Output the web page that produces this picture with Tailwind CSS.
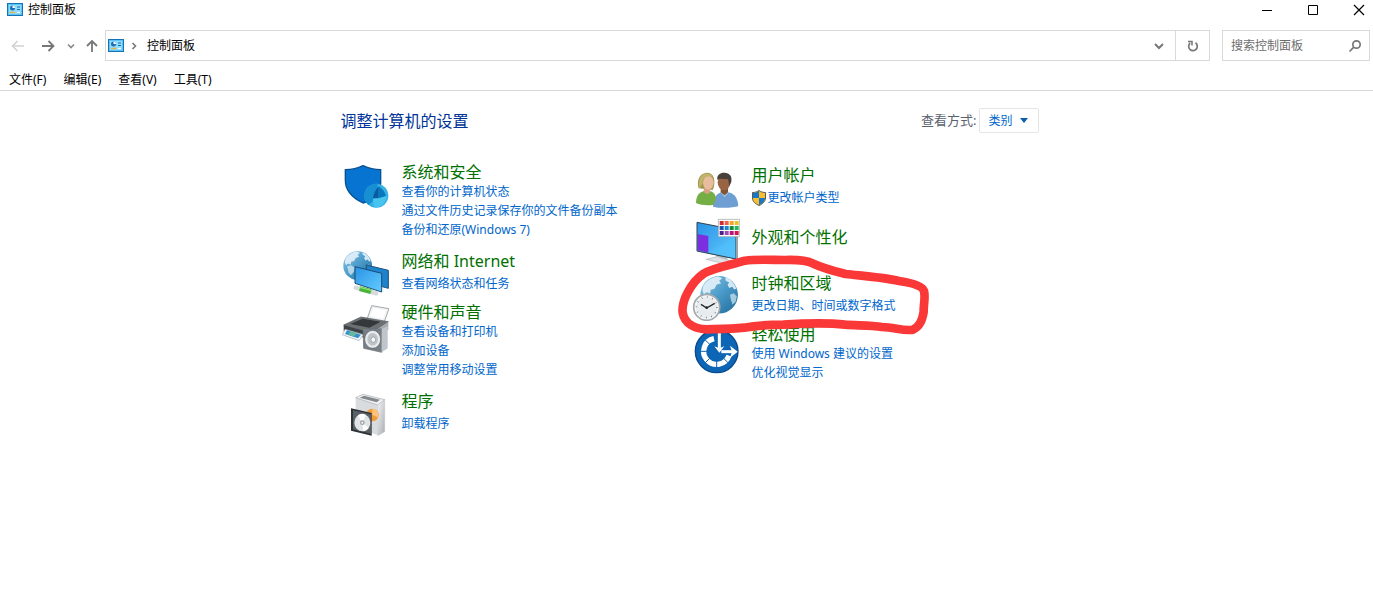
<!DOCTYPE html>
<html lang="zh-CN">
<head>
  <meta charset="UTF-8" />
  <meta name="viewport" content="width=device-width, initial-scale=1.0" />
  <title>控制面板</title>
  <script src="https://cdn.jsdelivr.net/npm/@tailwindcss/browser@4"></script>
</head>
<body class="bg-white min-h-screen text-xs text-black font-['Noto_Sans','Noto_Sans_CJK_SC',sans-serif]">

<!-- Shared symbols -->
<svg class="absolute w-0 h-0" aria-hidden="true">
  <symbol id="panel" viewBox="0 0 16 13">
    <rect x=".5" y=".5" width="15" height="12" fill="#5cc3f5" stroke="#1673b8"/>
    <rect x="2" y="2" width="12" height="9" fill="#8fdcff"/>
    <circle cx="5.500" cy="5" r="2.500" fill="#1d6fb5"/>
    <path d="M5.500 5V2.500A2.500 2.500 0 0 1 8 5z" fill="#fff"/>
    <path d="M3 9.500h5" stroke="#e2b53c" stroke-width="1.500"/>
    <path d="M10 4h3M10 6.500h3" stroke="#1d6fb5"/>
    <path d="M10 9.500h3" stroke="#fff"/>
  </symbol>
  <linearGradient id="globeFill" x1="0" y1="0" x2="1" y2="1">
    <stop offset="0" stop-color="#8fc7e6"/><stop offset=".5" stop-color="#4a9bc9"/><stop offset="1" stop-color="#1f6797"/>
  </linearGradient>
  <linearGradient id="screenFill" x1="0" y1="0" x2="1" y2="1">
    <stop offset="0" stop-color="#2a93e6"/><stop offset="1" stop-color="#63ccff"/>
  </linearGradient>
  <linearGradient id="metal" x1="0" y1="0" x2="1" y2="1">
    <stop offset="0" stop-color="#f4f5f6"/><stop offset="1" stop-color="#a9adb2"/>
  </linearGradient>
  <symbol id="globe" viewBox="0 0 100 100">
    <circle cx="50" cy="50" r="49" fill="url(#globeFill)"/>
    <path d="M8 28C18 10 34 3 48 2l10 5-8 6 5 7-12 4-5 10-10 3-2 10-8-4-8 6-4-10z" fill="#e3f1f8" opacity=".9"/>
    <path d="M66 4c14 5 24 16 29 30l-6 2-5-7-8 3-4-8 4-6-9-5z" fill="#e3f1f8" opacity=".9"/>
    <path d="M14 52l14-3 12 8-3 14-10 12-8-10z" fill="#d4e9f3" opacity=".75"/>
    <path d="M78 50l10-4 8 8-3 14-8 8-4-12z" fill="#d4e9f3" opacity=".7"/>
  </symbol>
</svg>

<!-- Title bar -->
<header class="flex items-center justify-between h-[19px] pl-[7px] pr-[8px]">
  <h1 class="flex items-center gap-[5px]">
    <svg class="w-4 h-[13px]"><use href="#panel"/></svg>
    控制面板
  </h1>
  <div class="flex items-center gap-[34px]">
    <button aria-label="最小化"><svg class="w-3 h-3" viewBox="0 0 12 12"><path d="M1 6.500h10" stroke="#000"/></svg></button>
    <button aria-label="最大化"><svg class="w-3 h-3" viewBox="0 0 12 12"><path d="M1.500 1.500h9v9h-9z" fill="none" stroke="#000"/></svg></button>
    <button aria-label="关闭"><svg class="w-3 h-3" viewBox="0 0 12 12"><path d="M1 1l10 10M11 1L1 11" stroke="#000" stroke-width="1.200"/></svg></button>
  </div>
</header>

<!-- Navigation -->
<div class="flex items-center h-[31px] mt-[11px] pl-[11px] pr-[3px]">
  <div class="flex items-center shrink-0 w-[94px]">
    <button aria-label="后退"><svg class="w-[14px] h-[14px]" viewBox="0 0 14 14" fill="none" stroke="#d2d2d2" stroke-width="1.600"><path d="M13 7H1.500M6.500 2l-5 5 5 5"/></svg></button>
    <button class="ml-4" aria-label="前进"><svg class="w-[14px] h-[14px]" viewBox="0 0 14 14" fill="none" stroke="#777" stroke-width="1.800"><path d="M1 7h11.500M7.500 2l5 5-5 5"/></svg></button>
    <button class="ml-3" aria-label="最近浏览的位置"><svg class="w-2 h-2" viewBox="0 0 8 8" fill="none" stroke="#888" stroke-width="1.600"><path d="M1 2.500l3 3 3-3"/></svg></button>
    <button class="ml-[10px]" aria-label="向上"><svg class="w-[14px] h-[14px]" viewBox="0 0 14 14" fill="none" stroke="#777" stroke-width="1.800"><path d="M7 13V2M2 7l5-5 5 5"/></svg></button>
  </div>
  <div class="flex flex-1 items-center h-[31px] border border-[#d9d9d9] pl-[2px]">
    <svg class="w-4 h-[13px]"><use href="#panel"/></svg>
    <svg class="w-2 h-2 ml-[6px]" viewBox="0 0 8 8" fill="none" stroke="#777" stroke-width="1.600"><path d="M2.500 1l3 3-3 3"/></svg>
    <a href="#" class="ml-[9px]">控制面板</a>
    <button class="ml-auto mr-[11px]" aria-label="展开地址"><svg class="w-[10px] h-[10px]" viewBox="0 0 10 10" fill="none" stroke="#777" stroke-width="2"><path d="M1 3l4 4 4-4"/></svg></button>
    <button class="flex items-center justify-center w-[34px] h-full border-l border-[#d9d9d9]" aria-label="刷新">
      <svg class="w-3 h-3" viewBox="0 0 12 12" fill="none" stroke="#777" stroke-width="1.700"><path d="M8.500 2.800A4.300 4.300 0 1 1 3.200 3"/><path d="M1 1.500h4V5.500" stroke-width="1.500"/></svg>
    </button>
  </div>
  <div class="flex items-center w-[148px] h-[31px] ml-3 border border-[#d9d9d9] pl-2 pr-[7px]">
    <input type="text" aria-label="搜索控制面板" placeholder="搜索控制面板" class="flex-1 min-w-0 outline-none placeholder:text-[#6d6d6d]" />
    <button aria-label="搜索"><svg class="w-[14px] h-[14px]" viewBox="0 0 14 14" fill="none" stroke="#777" stroke-width="1.700"><circle cx="8.500" cy="5.500" r="3.700"/><path d="M5.800 8.200L1.500 12.500"/></svg></button>
  </div>
</div>

<!-- Menu bar -->
<nav class="flex items-center gap-[17px] h-[30px] pl-[9px] pt-2 border-b border-[#d9d9d9]">
  <button>文件(F)</button>
  <button>编辑(E)</button>
  <button>查看(V)</button>
  <button>工具(T)</button>
</nav>

<main class="max-w-[704px] mx-auto pl-[6px] pt-[17px]">
  <div class="flex items-center justify-between h-[25px]">
    <h2 class="text-base text-[#003399]">调整计算机的设置</h2>
    <div class="flex items-center gap-[2px]">
      <label for="viewBy" class="text-[13px] text-[#5a6270]">查看方式:</label>
      <div class="relative">
        <select id="viewBy" class="appearance-none block w-[60px] h-[25px] pl-[9px] border border-[#e5e5e5] rounded-xs bg-white text-[#0066cc]">
          <option>类别</option>
          <option>大图标</option>
          <option>小图标</option>
        </select>
        <svg class="absolute right-[11px] top-[10px] w-2 h-[5px] pointer-events-none" viewBox="0 0 8 5"><path d="M0 0h8L4 5z" fill="#0a5cad"/></svg>
      </div>
    </div>
  </div>

  <div class="grid grid-cols-[351px_1fr] items-start mt-[30px] leading-[19px] text-[#0066cc]">
    <!-- Left column -->
    <div>
      <section class="flex gap-[13px]">
        <svg class="w-12 h-12 shrink-0" viewBox="0 0 144 144">
          <path d="M13 20Q42 20 66 8q26 12 53 12v40c0 30-25 52-53 60C32 104 13 84 13 52z" fill="#0874d1" stroke="#07518f" stroke-width="4"/>
          <circle cx="106" cy="98" r="36" fill="#35b1e6"/>
          <path d="M106 62a36 36 0 0 0-36 36c0 14 6 22 12 28 18-12 28-30 28-64z" fill="#1690d2"/>
          <path d="M113 70v36H96c2-14 8-26 17-36z" fill="#075b9f"/>
          <path d="M113 70c12 8 20 18 22 30l-22 6z" fill="#0a77bd"/>
          <path d="M96 107l17-1 24-7c-2 20-16 34-34 35-5-8-8-16-7-27z" fill="#48c4ef"/>
        </svg>
        <div>
          <h3 class="text-base leading-[19px] text-[#007000]"><a href="#">系统和安全</a></h3>
          <a href="#" class="block">查看你的计算机状态</a>
          <a href="#" class="block">通过文件历史记录保存你的文件备份副本</a>
          <a href="#" class="block">备份和还原(Windows 7)</a>
        </div>
      </section>

      <section class="flex gap-[13px] mt-[10px]">
        <svg class="w-12 h-12 shrink-0" viewBox="0 0 144 144">
          <use href="#globe" x="6" y="6" width="88" height="88"/>
          <path d="M76 48l66 16v54l-66-18z" fill="#1f83cc" stroke="#1b5078" stroke-width="3"/>
          <path d="M42 53l80 20v56l-80-26z" fill="url(#screenFill)" stroke="#1b4d75" stroke-width="3"/>
          <path d="M44 116l62 17" stroke="#d5dadd" stroke-width="13" stroke-linecap="round"/>
          <path d="M56 119l34 9" stroke="#48b53a" stroke-width="15"/>
          <path d="M57 115l34 9" stroke="#8be06d" stroke-width="4"/>
        </svg>
        <div class="pt-[3px]">
          <h3 class="text-base leading-[19px] text-[#007000]"><a href="#">网络和 Internet</a></h3>
          <a href="#" class="block mt-[3px]">查看网络状态和任务</a>
        </div>
      </section>

      <section class="flex gap-[13px] mt-[6px]">
        <svg class="w-12 h-12 shrink-0 mt-[2px]" viewBox="0 0 144 144">
          <path d="M92 2l52 9-16 44-50-12z" fill="#f1f3f5" stroke="#a4a8ac" stroke-width="3"/>
          <path d="M97 9l38 7-9 25-38-8z" fill="#fff"/>
          <path d="M8 60l52-24 82 14-50 34z" fill="#6c7074" stroke="#55595c" stroke-width="2"/>
          <path d="M28 57l37-16 54 9-34 18z" fill="#34383b"/>
          <path d="M8 60l84 24v22L8 78z" fill="#3d4247"/>
          <path d="M92 84l50-34v24l-50 32z" fill="#a6abaf"/>
          <path d="M12 73l56 16-14 18-50-18z" fill="#f4f8fb" stroke="#9fa9b0" stroke-width="2"/>
          <path d="M18 76l42 13-9 11-39-13z" fill="#3a8fd0"/>
          <path d="M28 79l20 6-10 10-16-6z" fill="#62b99b"/>
          <path d="M66 70l56 2v70l-54-12z" fill="#777f86" stroke="#646b70" stroke-width="2"/>
          <path d="M122 72l18-8v66l-18 12z" fill="#bfc5ca"/>
          <ellipse cx="95" cy="103" rx="24" ry="27" fill="#e9ecee" stroke="#565c61" stroke-width="2"/>
          <ellipse cx="95" cy="103" rx="16" ry="19" fill="#bdc3c7"/>
          <ellipse cx="97" cy="104" rx="7" ry="8" fill="#f7f8f9" stroke="#858b90" stroke-width="2"/>
        </svg>
        <div>
          <h3 class="text-base leading-[19px] text-[#007000]"><a href="#">硬件和声音</a></h3>
          <a href="#" class="block">查看设备和打印机</a>
          <a href="#" class="block">添加设备</a>
          <a href="#" class="block">调整常用移动设置</a>
        </div>
      </section>

      <section class="flex gap-[13px] mt-[12px]">
        <svg class="w-12 h-12 shrink-0" viewBox="0 0 144 144">
          <path d="M44 20l66 22v90l-66-22z" fill="#d9dcdf"/>
          <path d="M44 20l22-10 65 16-21 16z" fill="#f1f2f3" stroke="#a2a6aa" stroke-width="2"/>
          <path d="M56 20l13-6 48 12-10 8z" fill="#83888d"/>
          <path d="M110 42l21-16v96l-21 12z" fill="url(#metal)" stroke="#b0b3b6" stroke-width="1"/>
          <circle cx="94" cy="72" r="19" fill="#f39a38"/>
          <path d="M94 53v19l17 7a19 19 0 0 0-17-26z" fill="#ffc37e"/>
          <path d="M30 52l62 14v68l-62-15z" fill="#2d3236"/>
          <path d="M36 58l54 12v58l-54-13z" fill="#596066"/>
          <ellipse cx="64" cy="95" rx="24" ry="26" fill="#e1e4e6"/>
          <path d="M64 95L50 73a24 26 0 0 1 25-1zM64 95l20 15a24 26 0 0 1-17 11z" fill="#fff"/>
          <circle cx="64" cy="95" r="7" fill="#9da3a8"/>
          <circle cx="64" cy="95" r="3" fill="#fff"/>
        </svg>
        <div class="pt-px">
          <h3 class="text-base leading-[19px] text-[#007000]"><a href="#">程序</a></h3>
          <a href="#" class="block mt-[3px]">卸载程序</a>
        </div>
      </section>
    </div>

    <!-- Right column -->
    <div>
      <section class="flex gap-[12px] mt-[2px]">
        <svg class="w-12 h-12 shrink-0" viewBox="0 0 144 144">
          <path d="M63 125c0-28 12-44 34-45 26 0 40 14 42 43-14 6-54 8-76 2z" fill="#6f9fd2"/>
          <path d="M84 80l14 16 14-16z" fill="#a8c9e8"/>
          <path d="M86 66h22v16l-10 9-12-9z" fill="#825335"/>
          <ellipse cx="96" cy="52" rx="19" ry="24" fill="#996443"/>
          <path d="M76 44c-2-16 10-22 22-21 14 1 23 9 20 27l-6 14-4-22c-12 2-20-4-32 2z" fill="#4a403b"/>
          <path d="M12 114c0-22 10-36 32-37 18 0 26 8 28 22l-6 20c-16 3-40 2-54-5z" fill="#76ae46"/>
          <path d="M20 70c-6-18-2-44 24-47 20 0 26 18 22 42l-4 10z" fill="#a59650"/>
          <path d="M38 64h16v18l-8 6-12-7z" fill="#d5a183"/>
          <ellipse cx="49" cy="53" rx="16" ry="21" fill="#e7bd9e"/>
          <path d="M32 55c0-18 10-22 30-20-5-10-20-13-30-6-12 8-12 26-10 41z" fill="#c0b36b"/>
        </svg>
        <div class="pt-px">
          <h3 class="text-base leading-[19px] text-[#007000]"><a href="#">用户帐户</a></h3>
          <a href="#" class="flex items-center gap-[2px] mt-[3px]">
            <svg class="w-[14px] h-4" viewBox="0 0 14 16">
              <path d="M7 .5c2 1.500 4 2 6.500 2V8c0 3.500-3 6-6.500 7.500C3.500 14 .5 11.500.5 8V2.500C3 2.500 5 2 7 .5z" fill="#f9bd2d"/>
              <path d="M7 1v7H1V3c2.500 0 4.500-1 6-2zM7 8h6c0 3-2.500 5.500-6 7z" fill="#1878c8"/>
              <path d="M7 .5c2 1.500 4 2 6.500 2V8c0 3.500-3 6-6.500 7.500C3.500 14 .5 11.500.5 8V2.500C3 2.500 5 2 7 .5z" fill="none" stroke="#535b61"/>
            </svg>
            更改帐户类型
          </a>
        </div>
      </section>

      <section class="flex gap-[12px] mt-[5px]">
        <svg class="w-12 h-12 shrink-0" viewBox="0 0 144 144">
          <path d="M72 106l34 8v18l-34-10z" fill="#b9bec3"/>
          <path d="M42 124l34-8 46 14-22 8z" fill="#dfe3e6" stroke="#aeb3b7" stroke-width="2"/>
          <path d="M15 13l121 24v88L15 100z" fill="url(#screenFill)"/>
          <path d="M17 48l32 6v50l-32-7z" fill="#7c2fe0"/>
          <path d="M49 106l84-52v70z" fill="#4fc1fb" opacity=".6"/>
          <path d="M15 13l117 23v87L15 99z" fill="none" stroke="#34414c" stroke-width="3"/>
          <path d="M132 36l6 1v84l-6 3z" fill="#9ba3aa"/>
          <path d="M79 4h64v52H79z" fill="#fff" stroke="#999ea2" stroke-width="2"/>
          <path d="M83 9h12v12H83z" fill="#d12a35"/><path d="M98 9h12v12H98z" fill="#ed624a"/><path d="M113 9h12v12h-12z" fill="#f4a328"/><path d="M128 9h12v12h-12z" fill="#ecc22a"/>
          <path d="M83 24h12v12H83z" fill="#1a56ae"/><path d="M98 24h12v12H98z" fill="#1689d1"/><path d="M113 24h12v12h-12z" fill="#168a3b"/><path d="M128 24h12v12h-12z" fill="#25b65c"/>
          <path d="M83 39h12v12H83z" fill="#4d218c"/><path d="M98 39h12v12H98z" fill="#9a4bb6"/><path d="M113 39h12v12h-12z" fill="#b3167d"/><path d="M128 39h12v12h-12z" fill="#d4144f"/>
        </svg>
        <h3 class="self-start pt-[10px] text-base leading-[19px] text-[#007000]"><a href="#">外观和个性化</a></h3>
      </section>

      <section class="relative flex gap-[12px] mt-[7px]">
        <svg class="w-12 h-12 shrink-0" viewBox="0 0 144 144">
          <use href="#globe" x="24" y="8" width="115" height="115"/>
          <circle cx="44" cy="103" r="39" fill="#f5f6f7" stroke="#a4a9ad" stroke-width="5"/>
          <circle cx="44" cy="103" r="32" fill="#e9ecee"/>
          <circle cx="44" cy="103" r="31" fill="none" stroke="#666d72" stroke-width="5" stroke-dasharray="2 14.230"/>
          <path d="M27 94l17 11 24-14" fill="none" stroke="#22272a" stroke-width="4"/>
          <circle cx="44" cy="104" r="4" fill="#22272a"/>
        </svg>
        <div class="pt-px">
          <h3 class="text-base leading-[19px] text-[#007000]"><a href="#">时钟和区域</a></h3>
          <a href="#" class="block mt-[3px]">更改日期、时间或数字格式</a>
        </div>
        <!-- Red marker loop -->
        <svg class="absolute z-10 -left-[22px] -top-[23px] w-[270px] h-[90px] pointer-events-none" viewBox="0 0 810 270" fill="none" stroke="#fb3838" stroke-width="26" stroke-linecap="round" stroke-linejoin="round">
          <path d="M38 188C34 154 62 98 101 71c28-18 78-25 124-39 35-5 82-2 122-2 34-1 62 1 83 11 36 16 66 23 97 31 53 6 113 10 160 21 35 5 69 13 75 30 5 20-2 43-1 63-5 27-12 43-32 53-27 5-55-7-93-8-35-6-76-4-111-7-61-7-123-4-185 0-42 0-83 3-118 9-39 4-77 4-113 5-35-2-65-17-71-50z"/>
        </svg>
      </section>

      <section class="flex gap-[12px] mt-[4px]">
        <svg class="w-12 h-12 shrink-0 mt-[2px]" viewBox="0 0 144 144">
          <circle cx="74" cy="73" r="64" fill="#0d65b5" stroke="#084a8c" stroke-width="4"/>
          <path d="M66 35A39 39 0 1 0 111 86" fill="none" stroke="#fff" stroke-width="16"/>
          <path d="M24 73h24M39 38l15 15M39 108l15-15M74 123V99M109 108L94 93" stroke="#0d65b5" stroke-width="3"/>
          <path d="M82 12v52" stroke="#fff" stroke-width="9"/>
          <path d="M67 58l15 19 15-19-15 6z" fill="#fff"/>
          <path d="M88 74h34" stroke="#fff" stroke-width="9"/>
          <path d="M114 56l23 18-23 18 6-18z" fill="#fff"/>
        </svg>
        <div>
          <h3 class="text-base leading-[19px] text-[#007000]"><a href="#">轻松使用</a></h3>
          <a href="#" class="block">使用 Windows 建议的设置</a>
          <a href="#" class="block">优化视觉显示</a>
        </div>
      </section>
    </div>
  </div>
</main>

</body>
</html>
